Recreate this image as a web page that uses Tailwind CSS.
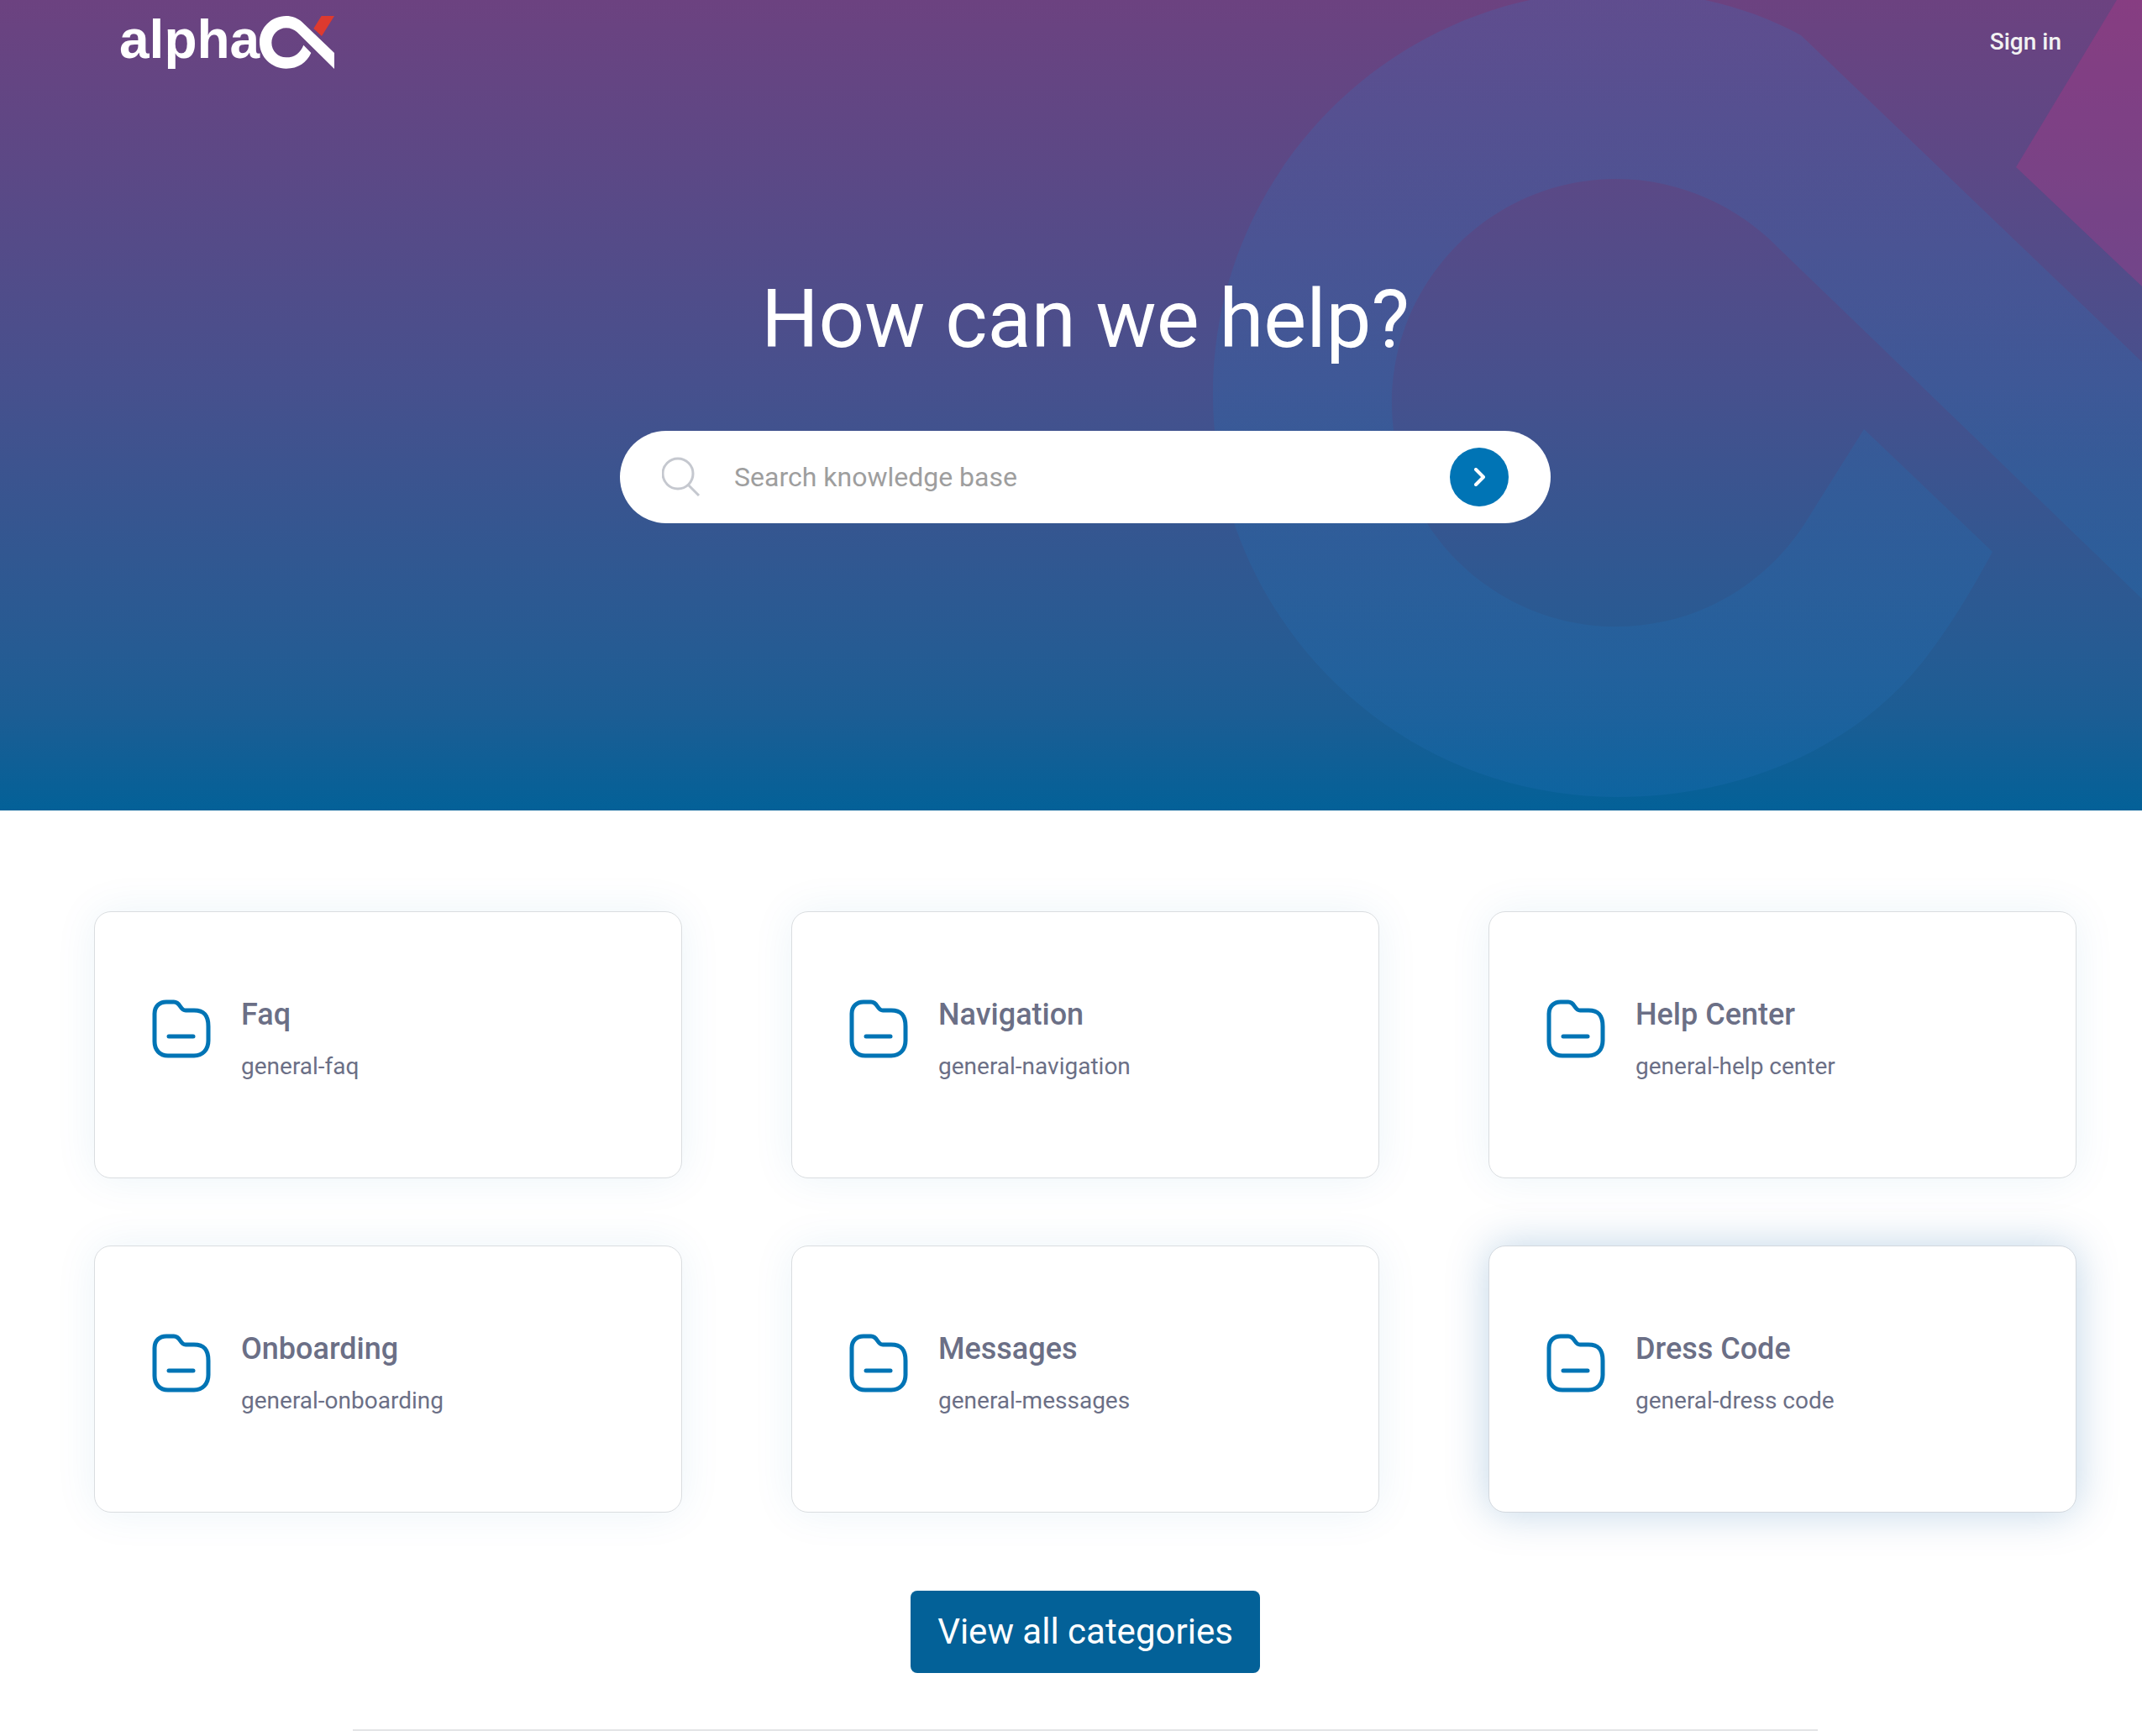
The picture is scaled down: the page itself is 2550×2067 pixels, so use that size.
<!DOCTYPE html>
<html lang="en">
<head>
  <title>alpha - Help Center</title>
  <meta charset="UTF-8">
  <meta name="viewport" content="width=device-width, initial-scale=1">
  <script src="https://cdn.jsdelivr.net/npm/@tailwindcss/browser@4"></script>
</head>
<body class="bg-white font-['Roboto',sans-serif]">

    <!-- Hero -->
    <div class="relative overflow-hidden h-[965px] bg-[linear-gradient(180deg,#6c4280_0%,#47508d_47%,#265b93_80%,#1c5d94_88%,#036198_100%)]">
        <svg class="absolute top-0 right-0 w-[1150px] h-[965px]" viewBox="1400 0 1150 965" aria-hidden="true">
            <defs>
                <linearGradient id="shade" x1="0" y1="0" x2="0" y2="1">
                    <stop offset="0" stop-color="#2d78c8"/>
                    <stop offset=".6" stop-color="#1878bc"/>
                    <stop offset="1" stop-color="#2872c0"/>
                </linearGradient>
            </defs>
            <path fill="url(#shade)" fill-opacity=".2" d="M2550 431 L2144 42 C2078 6 2002 -11 1924 -11 C1659 -11 1444 204 1444 469 C1444 734 1659 949 1924 949 C2078 949 2215 887 2295 780 C2324 742 2350 698 2372 657 L2219 511 L2155 613 C2106 696 2020 746 1924 746 C1777 746 1657 627 1657 480 C1657 333 1777 213 1924 213 C2000 213 2070 246 2119 297 L2550 713 Z"/>
            <path fill="#e62f88" fill-opacity=".22" d="M2520 0 L2400 199 L2550 341 V0 Z"/>
        </svg>

        <header class="relative flex items-center justify-between h-[100px] pl-[142px] pr-[96px]">
            <a href="#" class="flex items-center text-white" aria-label="alpha">
                <span class="pb-[6px] font-['Liberation_Sans',sans-serif] font-bold text-[64px] leading-[80px]">alpha</span>
                <svg class="w-[89px] h-[63px]" viewBox="567 55 267 189" aria-hidden="true">
                    <path fill="#fff" d="M834 187 L718 76 C702 62 683 55 662 55 C609 55 567 97 567 149 C567 202 609 243 662 243 C705 243 735 222 751 187 L724 159 C713 186 694 203 662 203 C633 203 610 180 610 151 C610 122 633 98 662 98 C678 98 691 104 701 113 L834 244 Z"/>
                    <path fill="#dd3a2f" d="M788 55 H834 L789 127 L760 100 Z"/>
                </svg>
            </a>
            <a href="#" class="text-[#f2f2f2] font-medium text-[28px] leading-[36px]">Sign in</a>
        </header>

        <div class="relative flex flex-col items-center pl-[34px] pt-[224px]">
            <h1 class="text-white text-[96px] leading-[112px]">How can we help?</h1>
            <form class="mt-[77px] flex items-center w-[1108px] h-[110px] rounded-full bg-white px-[50px]">
                <svg class="w-[46px] h-[48px]" viewBox="0 0 46 48" fill="none" stroke="#c5c8cf" stroke-width="3" aria-hidden="true">
                    <circle cx="19" cy="20" r="18"/>
                    <path d="M31 33 L44 46"/>
                </svg>
                <input type="text" aria-label="Search knowledge base" placeholder="Search knowledge base" class="flex-1 ml-[40px] text-[32px] leading-[40px] outline-none placeholder:text-[#9e9e9e]">
                <button type="submit" aria-label="Search" class="flex items-center justify-center size-[70px] rounded-full bg-[#0074b5]">
                    <svg class="w-[14px] h-[22px]" viewBox="0 0 14 22" fill="none" stroke="#fff" stroke-width="4" stroke-linecap="round" stroke-linejoin="round" aria-hidden="true">
                        <path d="M3 2 L12 11 L3 20"/>
                    </svg>
                </button>
            </form>
        </div>
    </div>

    <svg class="hidden">
        <symbol id="folder" viewBox="0 0 70 70">
            <g fill="none" stroke="#0074b5" stroke-width="5" stroke-linecap="round" stroke-linejoin="round">
                <path d="M3 17 C3 8 9 3 17 3 H26 C34 3 33 13 40 13 H50 C62 13 67 19 67 32 V49 C67 60 60 67 50 67 H19 C9 67 3 60 3 50 Z"/>
                <path d="M20 44 H49"/>
            </g>
        </symbol>
    </svg>

    <!-- Categories -->
    <main class="pt-[120px] pl-[112px] pr-[78px]">
        <div class="grid grid-cols-3 gap-x-[130px] gap-y-[80px] text-[#6b6f86]">
            <a href="#" class="flex gap-[36px] h-[318px] rounded-[20px] border border-[#dadde0] bg-white px-[68px] pt-[98px] shadow-[0_0_50px_#0074b514]">
                <svg class="size-[70px] mt-[6px]"><use href="#folder"/></svg>
                <div>
                    <h2 class="font-medium text-[36px] leading-[48px]">Faq</h2>
                    <p class="mt-[20px] text-[28px] leading-[36px]">general-faq</p>
                </div>
            </a>
            <a href="#" class="flex gap-[36px] h-[318px] rounded-[20px] border border-[#dadde0] bg-white px-[68px] pt-[98px] shadow-[0_0_50px_#0074b514]">
                <svg class="size-[70px] mt-[6px]"><use href="#folder"/></svg>
                <div>
                    <h2 class="font-medium text-[36px] leading-[48px]">Navigation</h2>
                    <p class="mt-[20px] text-[28px] leading-[36px]">general-navigation</p>
                </div>
            </a>
            <a href="#" class="flex gap-[36px] h-[318px] rounded-[20px] border border-[#dadde0] bg-white px-[68px] pt-[98px] shadow-[0_0_50px_#0074b514]">
                <svg class="size-[70px] mt-[6px]"><use href="#folder"/></svg>
                <div>
                    <h2 class="font-medium text-[36px] leading-[48px]">Help Center</h2>
                    <p class="mt-[20px] text-[28px] leading-[36px]">general-help center</p>
                </div>
            </a>
            <a href="#" class="flex gap-[36px] h-[318px] rounded-[20px] border border-[#dadde0] bg-white px-[68px] pt-[98px] shadow-[0_0_50px_#0074b514]">
                <svg class="size-[70px] mt-[6px]"><use href="#folder"/></svg>
                <div>
                    <h2 class="font-medium text-[36px] leading-[48px]">Onboarding</h2>
                    <p class="mt-[20px] text-[28px] leading-[36px]">general-onboarding</p>
                </div>
            </a>
            <a href="#" class="flex gap-[36px] h-[318px] rounded-[20px] border border-[#dadde0] bg-white px-[68px] pt-[98px] shadow-[0_0_50px_#0074b514]">
                <svg class="size-[70px] mt-[6px]"><use href="#folder"/></svg>
                <div>
                    <h2 class="font-medium text-[36px] leading-[48px]">Messages</h2>
                    <p class="mt-[20px] text-[28px] leading-[36px]">general-messages</p>
                </div>
            </a>
            <a href="#" class="flex gap-[36px] h-[318px] rounded-[20px] border border-[#d3d8de] bg-white px-[68px] pt-[98px] shadow-[0_0_50px_#0058a040]">
                <svg class="size-[70px] mt-[6px]"><use href="#folder"/></svg>
                <div>
                    <h2 class="font-medium text-[36px] leading-[48px]">Dress Code</h2>
                    <p class="mt-[20px] text-[28px] leading-[36px]">general-dress code</p>
                </div>
            </a>
        </div>

        <div class="flex justify-center mt-[93px]">
            <button type="button" class="w-[416px] h-[98px] rounded-[8px] bg-[#036198] text-white text-[42px] leading-[48px]">View all categories</button>
        </div>
        <hr class="mt-[67px] mx-[308px] border-t-2 border-[#e3e4e6]">
    </main>
</body>
</html>
